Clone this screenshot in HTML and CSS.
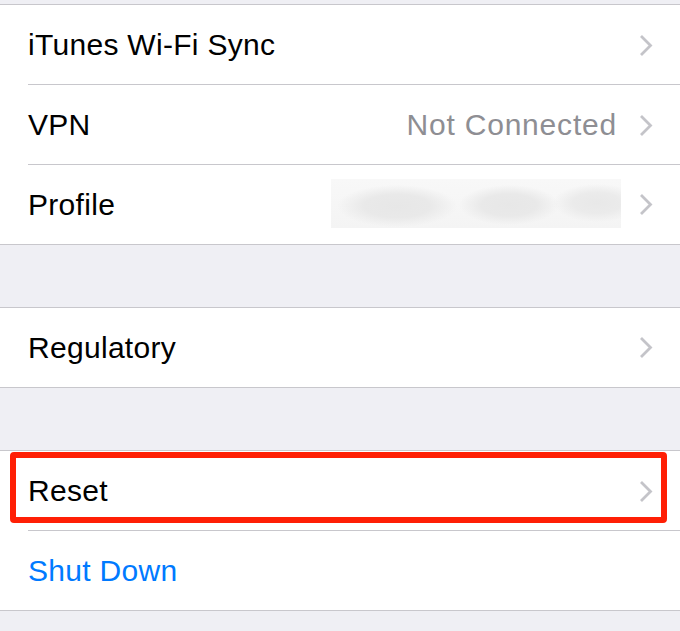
FILE: index.html
```html
<!DOCTYPE html>
<html lang="en">
<head>
<meta charset="utf-8">
<title>Settings – General</title>
<link rel="stylesheet" href="styles.css">
</head>
<body>
  <div class="screen">
    <div class="spacer spacer-top"></div>

    <section class="group">
      <div class="row">
        <span class="label">iTunes Wi-Fi Sync</span>
        <svg class="chevron" viewBox="0 0 14 23" aria-hidden="true"><path d="M2 2 L11.5 11.5 L2 21"/></svg>
      </div>
      <div class="row">
        <span class="label">VPN</span>
        <span class="value">Not Connected</span>
        <svg class="chevron" viewBox="0 0 14 23" aria-hidden="true"><path d="M2 2 L11.5 11.5 L2 21"/></svg>
      </div>
      <div class="row">
        <span class="label">Profile</span>
        <span class="blurred" aria-label="hidden profile name"></span>
        <svg class="chevron" viewBox="0 0 14 23" aria-hidden="true"><path d="M2 2 L11.5 11.5 L2 21"/></svg>
      </div>
    </section>

    <div class="spacer"></div>

    <section class="group">
      <div class="row">
        <span class="label">Regulatory</span>
        <svg class="chevron" viewBox="0 0 14 23" aria-hidden="true"><path d="M2 2 L11.5 11.5 L2 21"/></svg>
      </div>
    </section>

    <div class="spacer"></div>

    <section class="group">
      <div class="row row-highlight">
        <span class="label">Reset</span>
        <svg class="chevron" viewBox="0 0 14 23" aria-hidden="true"><path d="M2 2 L11.5 11.5 L2 21"/></svg>
        <span class="highlight-box"></span>
      </div>
      <div class="row">
        <span class="label label-action">Shut Down</span>
      </div>
    </section>

    <div class="spacer spacer-bottom"></div>
  </div>
</body>
</html>
```

FILE: styles.css
```css
* {
  box-sizing: border-box;
}

html, body {
  margin: 0;
  padding: 0;
  background: #efeff4;
  overflow: hidden;
}

body {
  font-family: "Liberation Sans", Arial, Helvetica, sans-serif;
  color: #000;
}

.screen {
  width: 680px;
  height: 631px;
  display: flex;
  flex-direction: column;
}

.spacer {
  height: 62px;
  flex: none;
  background: #efeff4;
}

.spacer-top {
  height: 4px;
}

.spacer-bottom {
  height: auto;
  flex: 1;
}

.group {
  flex: none;
  background: #fff;
  border-top: 1px solid #c8c7cc;
  border-bottom: 1px solid #c8c7cc;
  display: flex;
  flex-direction: column;
}

.row {
  position: relative;
  height: 80px;
  display: flex;
  align-items: center;
  padding: 0 27px 0 28px;
  gap: 22px;
}

.row:last-child {
  height: 79px;
}

.row:not(:last-child)::after {
  content: "";
  position: absolute;
  left: 28px;
  right: 0;
  bottom: 0;
  height: 1px;
  background: #c8c7cc;
}

.label {
  flex: 1;
  font-size: 30px;
  letter-spacing: 0.3px;
  white-space: nowrap;
}

.label-action {
  color: #007aff;
}

.value {
  font-size: 30px;
  letter-spacing: 0.8px;
  color: #8e8e93;
  white-space: nowrap;
}

.chevron {
  width: 14px;
  height: 23px;
  flex: none;
  fill: none;
  stroke: #c4c4c9;
  stroke-width: 2.8;
  stroke-linecap: butt;
  stroke-linejoin: miter;
}

.blurred {
  width: 290px;
  height: 49px;
  margin-right: -4px;
  margin-top: -3px;
  flex: none;
  background:
    radial-gradient(ellipse 60px 21px at 66px 27px, #e7e7e7 0%, #e9e9e9 55%, rgba(245,245,245,0) 100%),
    radial-gradient(ellipse 50px 20px at 178px 26px, #e7e7e7 0%, #e9e9e9 55%, rgba(245,245,245,0) 100%),
    radial-gradient(ellipse 44px 19px at 266px 24px, #e8e8e8 0%, #ebebeb 55%, rgba(245,245,245,0) 100%),
    linear-gradient(#f8f8f8, #f4f4f4);
}

.highlight-box {
  position: absolute;
  left: 10px;
  top: 1px;
  width: 657px;
  height: 71px;
  border: 6px solid #ff1f05;
  border-radius: 4px;
  pointer-events: none;
}
```
